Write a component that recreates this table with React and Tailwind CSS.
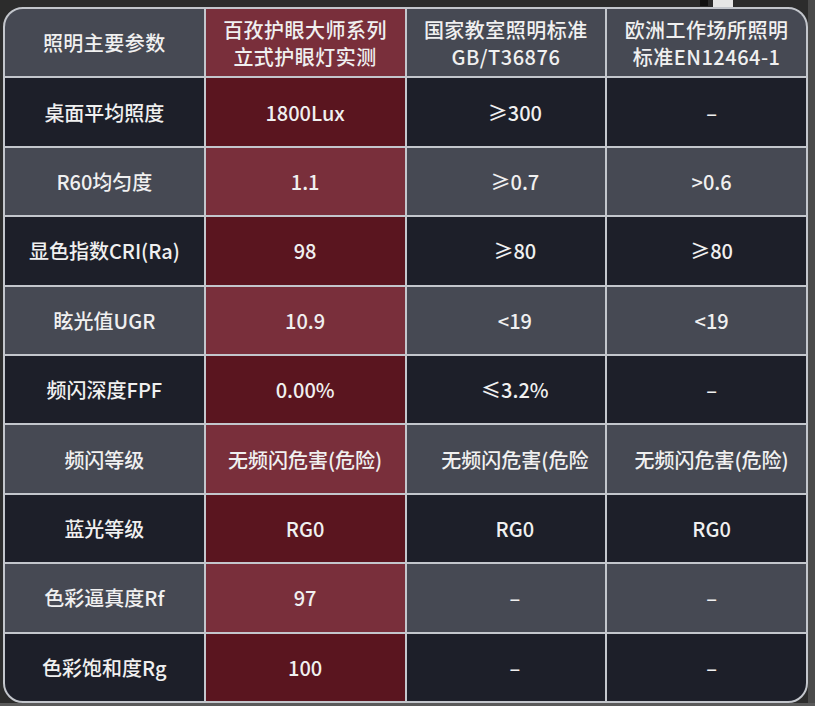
import React from "react";

const headers = [
  ["照明主要参数"],
  ["百孜护眼大师系列", "立式护眼灯实测"],
  ["国家教室照明标准", "GB/T36876"],
  ["欧洲工作场所照明", "标准EN12464-1"],
];

const rows = [
  ["桌面平均照度", "1800Lux", "≥300", "-"],
  ["R60均匀度", "1.1", "≥0.7", ">0.6"],
  ["显色指数CRI(Ra)", "98", "≥80", "≥80"],
  ["眩光值UGR", "10.9", "<19", "<19"],
  ["频闪深度FPF", "0.00%", "≤3.2%", "-"],
  ["频闪等级", "无频闪危害(危险)", "无频闪危害(危险", "无频闪危害(危险)"],
  ["蓝光等级", "RG0", "RG0", "RG0"],
  ["色彩逼真度Rf", "97", "-", "-"],
  ["色彩饱和度Rg", "100", "-", "-"],
];

const cellBg = (light, red) => {
  if (red) return light ? "bg-[#792f3b]" : "bg-[#5a151f]";
  return light ? "bg-[#464953]" : "bg-[#1d1f29]";
};

const padFor = (col) => {
  if (col === 2) return "pl-[18px]";
  if (col === 3) return "pl-[10px]";
  return "";
};

const App = () => {
  return (
    <div
      className="relative w-[815px] h-[706px] bg-[#2c2c2c] pt-[7px] pl-[3px] overflow-hidden"
      style={{ fontFamily: '"Noto Sans CJK SC", "Noto Sans", sans-serif' }}
    >
      <div className="absolute top-0 left-[700px] w-[8px] h-[6px] bg-[#111]" />
      <div className="absolute top-0 left-[713px] w-[20px] h-[7px] bg-[#e6e6e6]" />
      <div className="absolute top-0 right-0 w-[7px] h-[706px] bg-[#4a4a4a]" />
      <div className="absolute bottom-0 left-0 w-[815px] h-[3px] bg-[#5a5a5a]" />

      <div className="relative w-[805px] h-[696px] rounded-[20px] border-2 border-[#c3c6cc] bg-[#c3c6cc] overflow-hidden grid grid-cols-4 grid-rows-10 gap-[2px] text-[#f0f0f0] font-medium">
        {headers.map((lines, i) => (
          <div
            key={`h${i}`}
            className={`${cellBg(true, i === 1)} flex flex-col items-center justify-center text-[20px] leading-[27px] tracking-[0.5px]`}
          >
            {lines.map((l) => (
              <span key={l}>{l}</span>
            ))}
          </div>
        ))}
        {rows.map((row, r) =>
          row.map((text, c) => (
            <div
              key={`${r}-${c}`}
              className={`${cellBg(r % 2 === 1, c === 1)} ${padFor(c)} flex items-center justify-center whitespace-nowrap overflow-hidden text-[20px] leading-[27px]`}
            >
              {text === "-" ? "–" : text}
            </div>
          ))
        )}
      </div>
    </div>
  );
};

export default App;
